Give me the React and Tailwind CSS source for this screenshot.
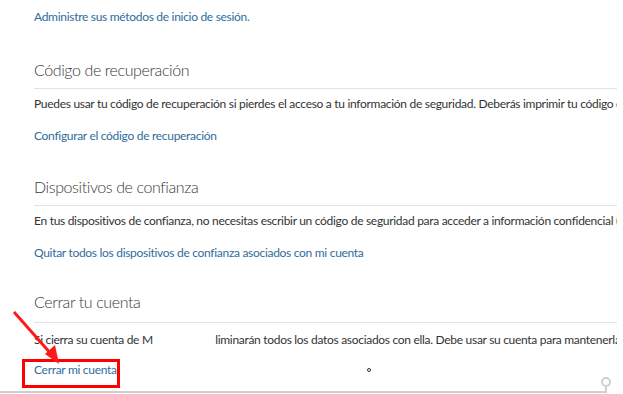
import React from 'react'

const font = { fontFamily: 'Lato, "Noto Sans", sans-serif' }

const body = 'text-[12px] leading-[18px] tracking-[-0.3px] whitespace-nowrap'
const heading = 'text-[16px] leading-[24px] tracking-[-0.4px] font-light text-[#3a3a3a]'

function Section({ title, text, link, className = '' }) {
  return (
    <section className={className}>
      <h2 className={heading}>{title}</h2>
      <div className="mt-[6px] h-px bg-[#e3e3e3]" />
      <p className={`mt-[6px] text-[#333] ${body}`}>{text}</p>
      <a className={`block mt-[14px] text-[#2f6c9c] ${body}`}>{link}</a>
    </section>
  )
}

export default function App() {
  return (
    <div className="relative w-[623px] h-[394px] bg-white overflow-hidden" style={font}>
      <div className="w-[617px] pl-[34px] overflow-hidden">
        <a className={`block pt-[8px] text-[#2f6c9c] ${body}`}>
          Administre sus métodos de inicio de sesión.
        </a>

        <Section
          className="mt-[32px]"
          title="Código de recuperación"
          text="Puedes usar tu código de recuperación si pierdes el acceso a tu información de seguridad. Deberás imprimir tu código de recuperación"
          link="Configurar el código de recuperación"
        />

        <Section
          className="mt-[30px]"
          title="Dispositivos de confianza"
          text="En tus dispositivos de confianza, no necesitas escribir un código de seguridad para acceder a información confidencial (como"
          link="Quitar todos los dispositivos de confianza asociados con mi cuenta"
        />

        <section className="mt-[28px]">
          <h2 className={heading}>Cerrar tu cuenta</h2>
          <div className="mt-[8px] h-px bg-[#e3e3e3]" />
          <p className={`mt-[8px] text-[#333] ${body}`}>
            Si cierra su cuenta de M<span className="text-white">icrosoft, se e</span>liminarán todos los datos asociados con ella. Debe usar su cuenta para mantenerla activa.
          </p>
          <div className="mt-[12px] flex items-center">
            <a className={`text-[#2f6c9c] ${body}`}>Cerrar mi cuenta</a>
            <span className="ml-[250px] w-[4px] h-[4px] rounded-full border border-[#333]" />
          </div>
        </section>
      </div>

      {/* highlight box */}
      <div className="absolute left-[22px] top-[359px] w-[98px] h-[29px] border-[3px] border-[#ff0000]" />

      {/* arrow */}
      <svg className="absolute left-0 top-0" width="623" height="394">
        <line x1="14" y1="312" x2="52" y2="355" stroke="#ff1a1a" strokeWidth="3" />
        <polygon points="59,364 45,354 55,345" fill="#ff1a1a" />
      </svg>

      {/* bottom scroll edge */}
      <div className="absolute left-0 bottom-[1px] w-[606px] h-[2px] bg-[#cfcfcf]" />
      <div className="absolute left-[605px] top-[385px] w-[2px] h-[8px] bg-[#cfcfcf]" />
      <div className="absolute left-[601px] top-[377px] w-[10px] h-[10px] rounded-full border-2 border-[#cfcfcf] bg-white" />
    </div>
  )
}
